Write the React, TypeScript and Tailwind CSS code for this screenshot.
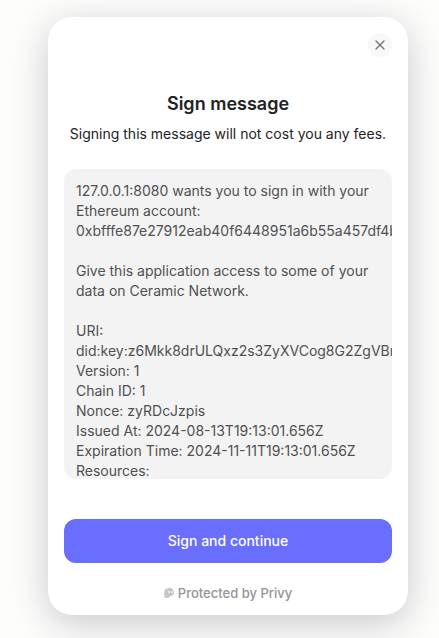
import { X } from "lucide-react";

const message = `127.0.0.1:8080 wants you to sign in with your Ethereum account:
0xbfffe87e27912eab40f6448951a6b55a457df4b

Give this application access to some of your data on Ceramic Network.

URI:
did:key:z6Mkk8drULQxz2s3ZyXVCog8G2ZgVBm
Version: 1
Chain ID: 1
Nonce: zyRDcJzpis
Issued At: 2024-08-13T19:13:01.656Z
Expiration Time: 2024-11-11T19:13:01.656Z
Resources:`;

function PrivyMark() {
  return (
    <svg viewBox="0 0 20 20" className="size-[10px]" aria-hidden="true">
      <path
        fill="#c6c6c8"
        d="M11 0C16 0 19.5 3 20 7.500C20.500 12.500 17 16.500 13 16.500C11 18 8.500 20 5 20C1.500 20 .5 18 1.500 16C0 14.500 0 12 .5 10.500C0 9 0 7 1 6C1 3 3 1.500 5.500 1.500C7 .5 9 0 11 0Z"
      />
      <ellipse cx="10" cy="8" rx="1.600" ry="2" fill="#fff" />
      <ellipse cx="16" cy="8" rx="1.600" ry="2" fill="#fff" />
    </svg>
  );
}

export default function App() {
  return (
    <main className="min-h-screen overflow-hidden bg-[#fdfdfb] pt-[17px] pr-[31px] pb-[23px] pl-12 font-['Inter',sans-serif]">
      <section
        role="dialog"
        aria-labelledby="sign-title"
        className="flex flex-col rounded-3xl bg-white px-4 pt-4 pb-3 shadow-[0_8px_36px_rgba(55,65,81,0.28)]"
      >
        <header className="flex justify-end">
          <button
            type="button"
            aria-label="Close"
            className="flex size-6 items-center justify-center rounded-full bg-[#f8f8f8] text-[#777777]"
          >
            <X size={16} strokeWidth={2} />
          </button>
        </header>
        <h1 id="sign-title" className="mt-[33px] text-center text-lg leading-7 font-semibold text-[#222224]">
          Sign message
        </h1>
        <p className="mt-1.5 text-center text-sm leading-5 text-[#222224]">
          Signing this message will not cost you any fees.
        </p>
        <div className="mt-[25px] h-[310px] overflow-hidden rounded-xl bg-[#f3f3f3] p-3 text-sm leading-5 whitespace-pre-wrap text-[#505052]">
          {message}
        </div>
        <button
          type="button"
          className="mt-10 h-11 rounded-xl bg-[#696eff] text-sm leading-5 font-medium text-white"
        >
          Sign and continue
        </button>
        <footer className="mt-5 flex items-center justify-center gap-1 text-[13px] leading-5 font-medium text-[#949496]">
          <PrivyMark />
          <span>Protected by Privy</span>
        </footer>
      </section>
    </main>
  );
}
